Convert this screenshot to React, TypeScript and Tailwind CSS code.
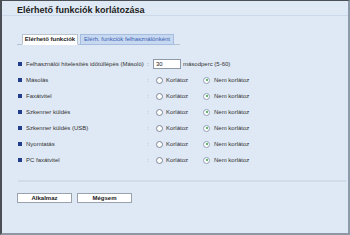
import React from "react";

const rows = [
  "Másolás",
  "Faxátvitel",
  "Szkenner küldés",
  "Szkenner küldés (USB)",
  "Nyomtatás",
  "PC faxátvitel",
];

function Radio({ checked }: { checked?: boolean }) {
  return (
    <span
      className={`w-[7px] h-[7px] rounded-full border bg-white flex items-center justify-center shrink-0 ${
        checked ? "border-[#8fa0b4]" : "border-[#7d8896]"
      }`}
    >
      {checked && <span className="w-[2px] h-[2px] rounded-full bg-[#2e9b3c]" />}
    </span>
  );
}

function Bullet() {
  return <span className="w-[4px] h-[4px] bg-[#233f8c] mr-[4px] shrink-0" />;
}

export default function App() {
  return (
    <div
      className="w-[350px] h-[235px] overflow-hidden bg-[#dfe9f5] border-l-2 border-t border-r-2 border-b-2 border-l-[#4b4f56] border-t-[#4b4f56] border-r-[#8d9aa9] border-b-[#8e98a4] text-[#333]"
      style={{ fontFamily: '"Liberation Sans", Arial, sans-serif' }}
    >
      {/* Title */}
      <div className="h-[15px] pl-[15px] pt-[4px] border-b border-[#cbd9ea]">
        <h1 className="text-[9px] leading-[11px] font-bold text-[#222]">Elérhető funkciók korlátozása</h1>
      </div>

      {/* Tabs */}
      <div className="mt-[18px] ml-[15px] w-[163px] pl-[5px] h-[11px] flex items-end border-b border-[#b3c2d5]">
        <div className="w-[56px] h-[11px] -mb-px bg-white border border-[#b9c3cf] border-b-white flex items-center justify-center text-[6px] font-bold text-[#222]">
          Elérhető funkciók
        </div>
        <div className="ml-[2px] w-[94px] h-[11px] -mb-px bg-[#c7d9f1] border border-[#a6bddf] flex items-center justify-center text-[6px] text-[#3b60b3]">
          Elérh. funkciók felhasználónként
        </div>
      </div>

      {/* Settings */}
      <div className="mt-[11px] text-[6px] leading-[8px]">
        <div className="h-[16px] pl-[16px] flex items-center">
          <Bullet />
          <span className="w-[121px]">Felhasználói hitelesítés időtúllépés (Másoló)</span>
          <span className="w-[6px] text-[#555]">:</span>
          <span className="w-[28px] h-[10px] bg-white border border-[#8f99a6] flex items-center pl-[2px] text-[#222]">30</span>
          <span className="ml-[2px]">másodperc (5-60)</span>
        </div>
        {rows.map((r) => (
          <div key={r} className="h-[16px] pl-[16px] flex items-center">
            <Bullet />
            <span className="w-[121px]">{r}</span>
            <span className="w-[9px] text-[#888]">:</span>
            <span className="w-[47px] flex items-center">
              <Radio />
              <span className="ml-[3px]">Korlátoz</span>
            </span>
            <span className="flex items-center">
              <Radio checked />
              <span className="ml-[4px]">Nem korlátoz</span>
            </span>
          </div>
        ))}
      </div>

      {/* Separator */}
      <div className="mt-[12px] ml-[16px] mr-[2px] h-[2px] bg-[#d0dcea]" />

      {/* Buttons */}
      <div className="mt-[11px] pl-[15px] flex gap-[5px]">
        <button className="w-[55px] h-[10px] bg-white border border-[#9aa3ad] text-[6px] leading-[8px] font-bold text-[#222]">
          Alkalmaz
        </button>
        <button className="w-[55px] h-[10px] bg-white border border-[#9aa3ad] text-[6px] leading-[8px] font-bold text-[#222]">
          Mégsem
        </button>
      </div>
    </div>
  );
}
